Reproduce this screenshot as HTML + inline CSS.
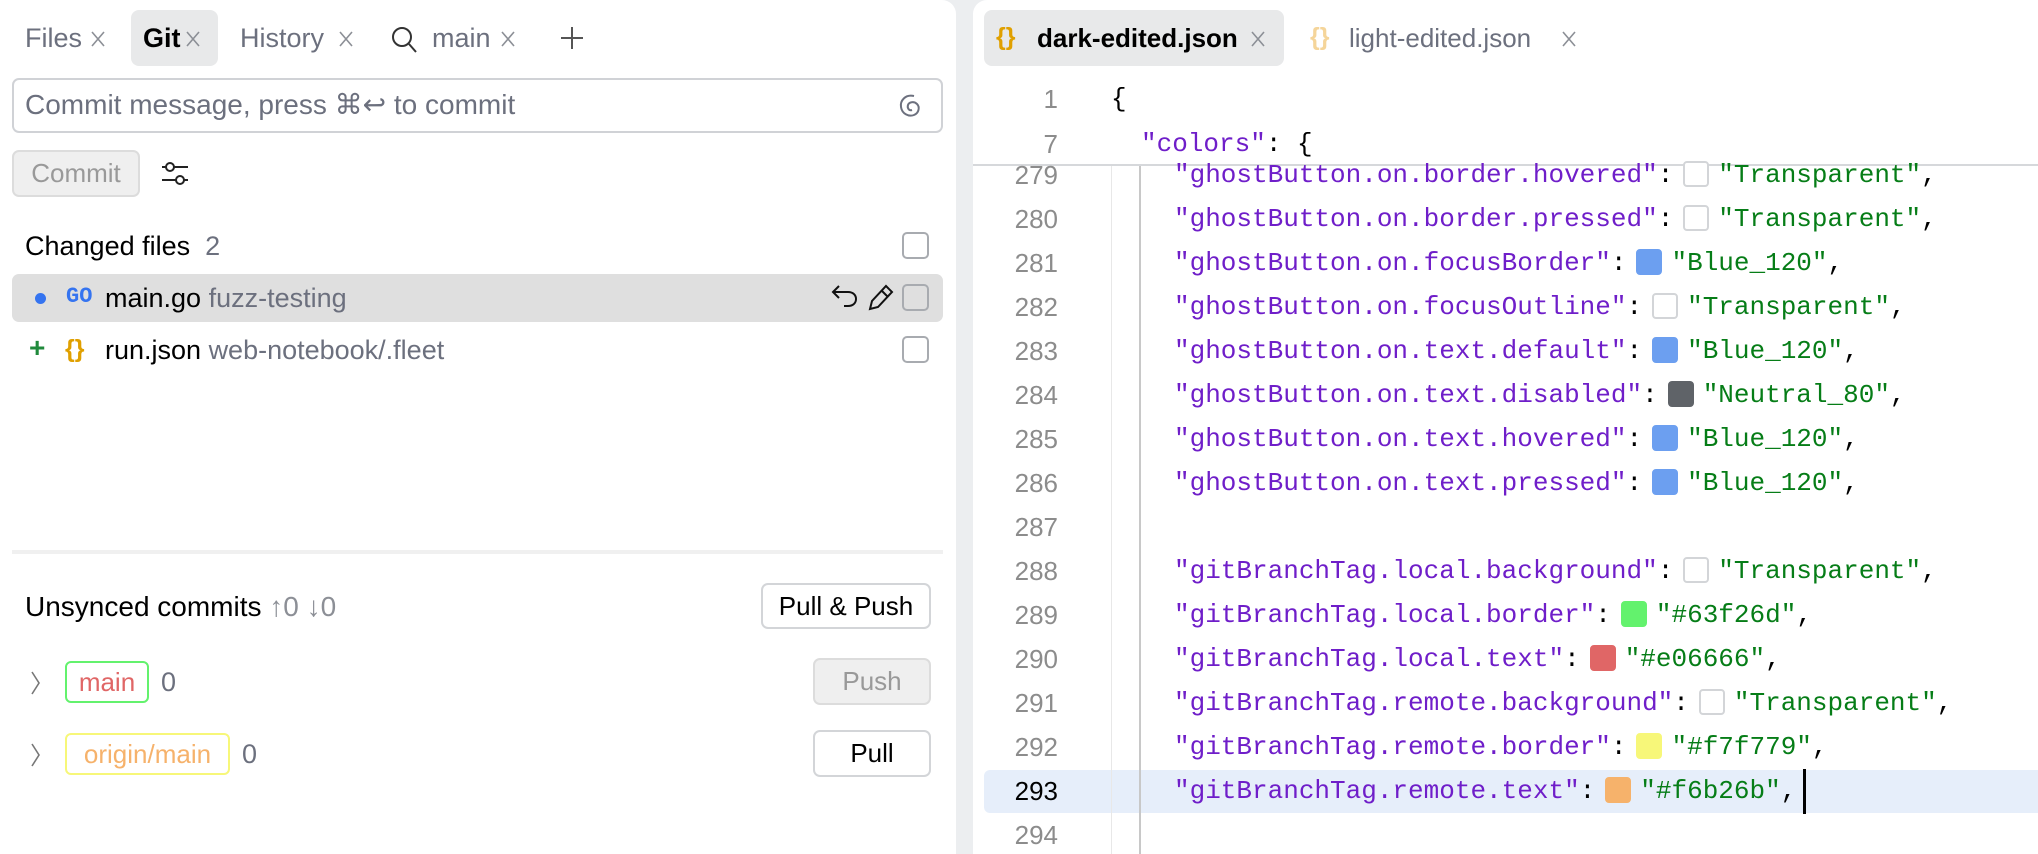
<!DOCTYPE html>
<html><head><meta charset="utf-8"><style>
*{margin:0;padding:0;box-sizing:border-box}
body{width:2038px;height:854px;background:#eceef0;position:relative;overflow:hidden;font-family:"Liberation Sans",sans-serif;color:#000}
.a{position:absolute;white-space:nowrap}
.ui{font-size:27px;line-height:30px}
.g{color:#6c707e}
.cb{position:absolute;width:27px;height:27px;border:2px solid #a8abb0;border-radius:5px;background:#fff}
.btn{position:absolute;border:2px solid #d3d5d8;border-radius:7px;background:#fff;font-size:26px;display:flex;align-items:center;justify-content:center}
.code{font-family:"Liberation Mono",monospace;font-size:26px;line-height:30px}
.k{color:#6f1ec9}.v{color:#067d17}
.ln{position:absolute;left:960px;width:98px;text-align:right;font-family:"Liberation Sans",sans-serif;font-size:26px;color:#8c8c8c;line-height:30px}
.sw{display:inline-block;width:26px;height:26px;border-radius:4px;vertical-align:-5px;margin:0 9px 0 10px;border:2px solid #d3d5d8}
</style></head><body>
<div class="a" style="left:0;top:0;width:956px;height:854px;background:#fff;border-radius:0 14px 0 0"></div>
<div class="a" style="left:131px;top:10px;width:87px;height:56px;background:#e8e9ea;border-radius:8px"></div>
<div class="a ui g" style="left:25px;top:23px">Files</div>
<div class="a ui" style="left:143px;top:23px;font-weight:bold">Git</div>
<div class="a ui g" style="left:240px;top:23px">History</div>
<div class="a ui g" style="left:432px;top:23px">main</div>
<svg class="a" style="left:0;top:0" width="600" height="70" stroke="#8c8f96" stroke-width="1.6" fill="none">
<path d="M92 32l12 14M104 32l-12 14M187 32l12 14M199 32l-12 14M340 32l12 14M352 32l-12 14M502 32l12 14M514 32l-12 14"/>
<circle cx="402" cy="37" r="9" stroke="#333" stroke-width="2"/><path d="M409 44l7 8" stroke="#333" stroke-width="2"/>
<path d="M572 27v22M561 38h22" stroke="#555" stroke-width="2"/>
</svg>
<div class="a" style="left:12px;top:78px;width:931px;height:55px;border:2px solid #d0d2d6;border-radius:7px"></div>
<div class="a g" style="left:25px;top:90px;font-size:28px;line-height:30px">Commit message, press ⌘↩ to commit</div>
<svg class="a" style="left:898px;top:93px" width="26" height="26" fill="none" stroke="#6c707e" stroke-width="2"><path d="M16 3C7 1 2 8 3 14c1 7 8 10 13 8 5-2 6-8 3-11-3-3-8-2-9 1-1 3 1 6 4 5"/></svg>
<div class="btn" style="left:12px;top:150px;width:128px;height:47px;background:#efefef;border-color:#dcdcdc;color:#999"><span>Commit</span></div>
<svg class="a" style="left:160px;top:160px" width="32" height="28" fill="none" stroke="#222" stroke-width="2"><path d="M2 7h4M14 7h14M2 20h14M24 20h4"/><circle cx="10" cy="7" r="4"/><circle cx="20" cy="20" r="4"/></svg>
<div class="a ui" style="left:25px;top:231px">Changed files&nbsp;&nbsp;<span class="g">2</span></div>
<div class="cb" style="left:902px;top:232px"></div>
<div class="a" style="left:12px;top:274px;width:931px;height:48px;background:#dfdfdf;border-radius:7px"></div>
<div class="a" style="left:35px;top:293px;width:11px;height:11px;border-radius:50%;background:#3574f0"></div>
<div class="a" style="left:66px;top:285px;font-family:'Liberation Mono',monospace;color:#3574f0;font-size:22px;font-weight:bold;line-height:24px">GO</div>
<div class="a ui" style="left:105px;top:283px">main.go <span class="g">fuzz-testing</span></div>
<svg class="a" style="left:830px;top:283px" width="70" height="30" fill="none" stroke="#111" stroke-width="2"><path d="M4 9h14c5 0 8 3 8 7s-3 7-8 7h-4M9 3L3 9l6 6"/><path d="M40 26l2-8 14-15 6 6-14 15zM51 7l6 6"/></svg>
<div class="cb" style="left:902px;top:284px;background:transparent"></div>
<div class="a" style="left:29px;top:333px;font-size:28px;color:#208a3c;font-weight:bold;line-height:30px">+</div>
<div class="a" style="left:65px;top:334px;font-size:25px;color:#e0a000;font-weight:bold;line-height:30px">{}</div>
<div class="a ui" style="left:105px;top:335px">run.json <span class="g">web-notebook/.fleet</span></div>
<div class="cb" style="left:902px;top:336px"></div>
<div class="a" style="left:12px;top:550px;width:931px;height:4px;background:#f0f0f0"></div>
<div class="a ui" style="left:25px;top:592px;font-size:28px">Unsynced commits <span style="color:#8c8f96">↑0 ↓0</span></div>
<div class="btn" style="left:761px;top:583px;width:170px;height:46px">Pull &amp; Push</div>
<svg class="a" style="left:28px;top:670px" width="16" height="100" fill="none" stroke="#777" stroke-width="1.6"><path d="M4 2l7 11-7 11M4 74l7 11-7 11"/></svg>
<div class="a" style="left:65px;top:661px;width:84px;height:42px;border:2px solid #63f26d;border-radius:6px;color:#e06666;font-size:26px;text-align:center;line-height:38px">main</div>
<div class="a ui g" style="left:161px;top:667px">0</div>
<div class="btn" style="left:813px;top:658px;width:118px;height:47px;background:#efefef;border-color:#dcdcdc;color:#999">Push</div>
<div class="a" style="left:65px;top:733px;width:165px;height:42px;border:2px solid #f7f779;border-radius:6px;color:#f6b26b;font-size:26px;text-align:center;line-height:38px">origin/main</div>
<div class="a ui g" style="left:242px;top:739px">0</div>
<div class="btn" style="left:813px;top:730px;width:118px;height:47px">Pull</div>
<div class="a" style="left:973px;top:0;width:1065px;height:854px;background:#fff;border-radius:14px 0 0 0"></div>
<div class="a" style="left:984px;top:10px;width:300px;height:56px;background:#e8e9ea;border-radius:8px"></div>
<div class="a" style="left:996px;top:22px;font-size:25px;color:#e0a000;font-weight:bold;line-height:30px">{}</div>
<div class="a ui" style="left:1037px;top:23px;font-weight:bold;font-size:26px">dark-edited.json</div>
<div class="a" style="left:1310px;top:22px;font-size:25px;color:#f5d59a;font-weight:bold;line-height:30px">{}</div>
<div class="a ui g" style="left:1349px;top:23px;font-size:26px">light-edited.json</div>
<svg class="a" style="left:1240px;top:0" width="340" height="70" stroke="#8c8f96" stroke-width="1.6"><path d="M12 32l12 14M24 32l-12 14M323 32l12 14M335 32l-12 14"/></svg>
<div class="ln" style="top:84px">1</div>
<div class="a code" style="left:1111px;top:84px">{</div>
<div class="ln" style="top:129px">7</div>
<div class="a code" style="left:1141px;top:129px"><span class="k">"colors"</span>: {</div>
<div class="a" style="left:973px;top:164px;width:1065px;height:2px;background:#d6d8db"></div>
<div class="a" style="left:984px;top:770px;width:1054px;height:43px;background:#e6eefa;border-radius:6px 0 0 6px"></div>
<div class="a" style="left:1111px;top:166px;width:1px;height:688px;background:#e8e8e8"></div>
<div class="a" style="left:1139px;top:166px;width:2px;height:688px;background:#c8c8c8"></div>
<div class="a" style="left:1803px;top:769px;width:3px;height:45px;background:#000"></div>
<div id="lines"></div>
<script>
var T='#fff',B='#6c9ff0';
var L=[[279,'ghostButton.on.border.hovered','Transparent',T],[280,'ghostButton.on.border.pressed','Transparent',T],[281,'ghostButton.on.focusBorder','Blue_120',B],[282,'ghostButton.on.focusOutline','Transparent',T],[283,'ghostButton.on.text.default','Blue_120',B],[284,'ghostButton.on.text.disabled','Neutral_80','#5f6368'],[285,'ghostButton.on.text.hovered','Blue_120',B],[286,'ghostButton.on.text.pressed','Blue_120',B],[287],[288,'gitBranchTag.local.background','Transparent',T],[289,'gitBranchTag.local.border','#63f26d','#63f26d'],[290,'gitBranchTag.local.text','#e06666','#e06666'],[291,'gitBranchTag.remote.background','Transparent',T],[292,'gitBranchTag.remote.border','#f7f779','#f7f779'],[293,'gitBranchTag.remote.text','#f6b26b','#f6b26b'],[294]];
var h='';
L.forEach(function(r,i){var y=160+i*44;
h+='<div class="ln" style="top:'+y+'px;'+(r[0]==293?'color:#000':'')+'">'+r[0]+'</div>';
if(r[1])h+='<div class="a code" style="left:1174px;top:'+y+'px"><span class="k">"'+r[1]+'"</span>:<span class="sw" style="background:'+r[3]+';'+(r[3]==T?'':'border-color:'+r[3])+'"></span><span class="v">"'+r[2]+'"</span>,</div>';});
document.getElementById('lines').innerHTML=h;
</script>
</body></html>
